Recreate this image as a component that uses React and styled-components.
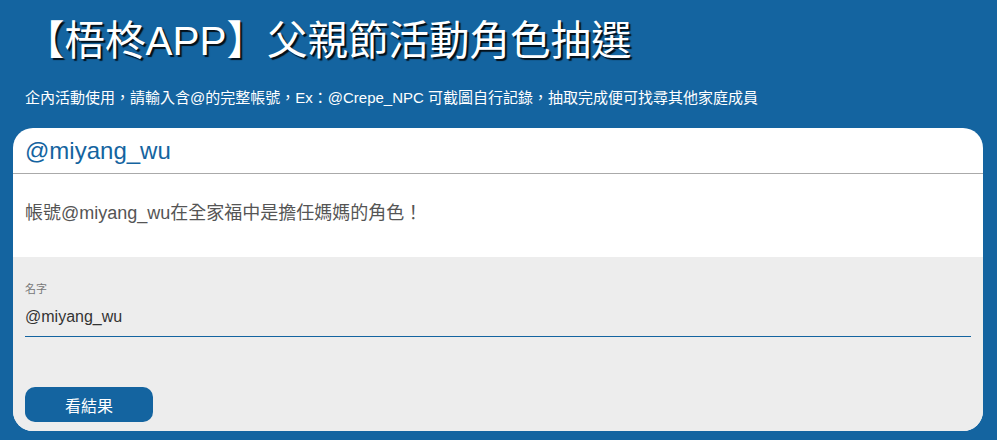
import React from 'react';
import styled, { createGlobalStyle } from 'styled-components';

const GlobalStyle = createGlobalStyle`
  body {
    margin: 0;
    background-color: #1464a0;
    font-family: "Liberation Sans", "Noto Sans CJK TC", sans-serif;
  }
`;

const Page = styled.div`
  padding: 0 14px 9px 13px;
`;

const Title = styled.h1`
  margin: 0;
  padding: 15px 0 0 11px;
  height: 65px;
  font-size: 40.5px;
  line-height: 52px;
  font-weight: normal;
  color: #fff;
  text-shadow: 2px 2px 1px rgba(0, 0, 0, 0.85);
`;

const Subtitle = styled.p`
  margin: 0;
  padding: 8px 0 0 12px;
  height: 40px;
  font-size: 15px;
  line-height: 20px;
  color: #fff;
`;

const Card = styled.div`
  background-color: #fff;
  border-radius: 20px;
  overflow: hidden;
`;

const CardHeader = styled.div`
  display: flex;
  align-items: center;
  height: 45px;
  padding: 0 12px;
  border-bottom: 1px solid #aaa;
  font-size: 24px;
  color: #1464a0;
`;

const CardBody = styled.div`
  height: 83px;
  padding: 0 12px;
  box-sizing: border-box;
  padding-top: 27px;
  font-size: 18px;
  line-height: 24px;
  color: #555;
`;

const Form = styled.div`
  background-color: #ededed;
  padding: 25px 12px 10px;
  height: 174px;
  box-sizing: border-box;
`;

const Label = styled.label`
  display: block;
  font-size: 11px;
  line-height: 14px;
  color: #777;
`;

const Input = styled.input`
  display: block;
  width: 100%;
  box-sizing: border-box;
  margin-top: 11px;
  padding: 0 0 9px;
  border: none;
  border-bottom: 1px solid #1464a0;
  background: transparent;
  font-family: inherit;
  font-size: 16px;
  line-height: 20px;
  color: #333;
  outline: none;
`;

const Button = styled.button`
  display: block;
  margin-top: 50px;
  width: 128px;
  height: 35px;
  border: none;
  border-radius: 10px;
  background-color: #1464a0;
  color: #fff;
  font-family: inherit;
  font-size: 16px;
  cursor: pointer;
`;

const App = () => {
  return (
    <>
      <GlobalStyle />
      <Page>
        <Title>【梧柊APP】父親節活動角色抽選</Title>
        <Subtitle>企內活動使用，請輸入含@的完整帳號，Ex：@Crepe_NPC 可截圖自行記錄，抽取完成便可找尋其他家庭成員</Subtitle>
        <Card>
          <CardHeader>@miyang_wu</CardHeader>
          <CardBody>帳號@miyang_wu在全家福中是擔任媽媽的角色！</CardBody>
          <Form>
            <Label>名字</Label>
            <Input defaultValue="@miyang_wu" />
            <Button>看結果</Button>
          </Form>
        </Card>
      </Page>
    </>
  );
};

export default App;
